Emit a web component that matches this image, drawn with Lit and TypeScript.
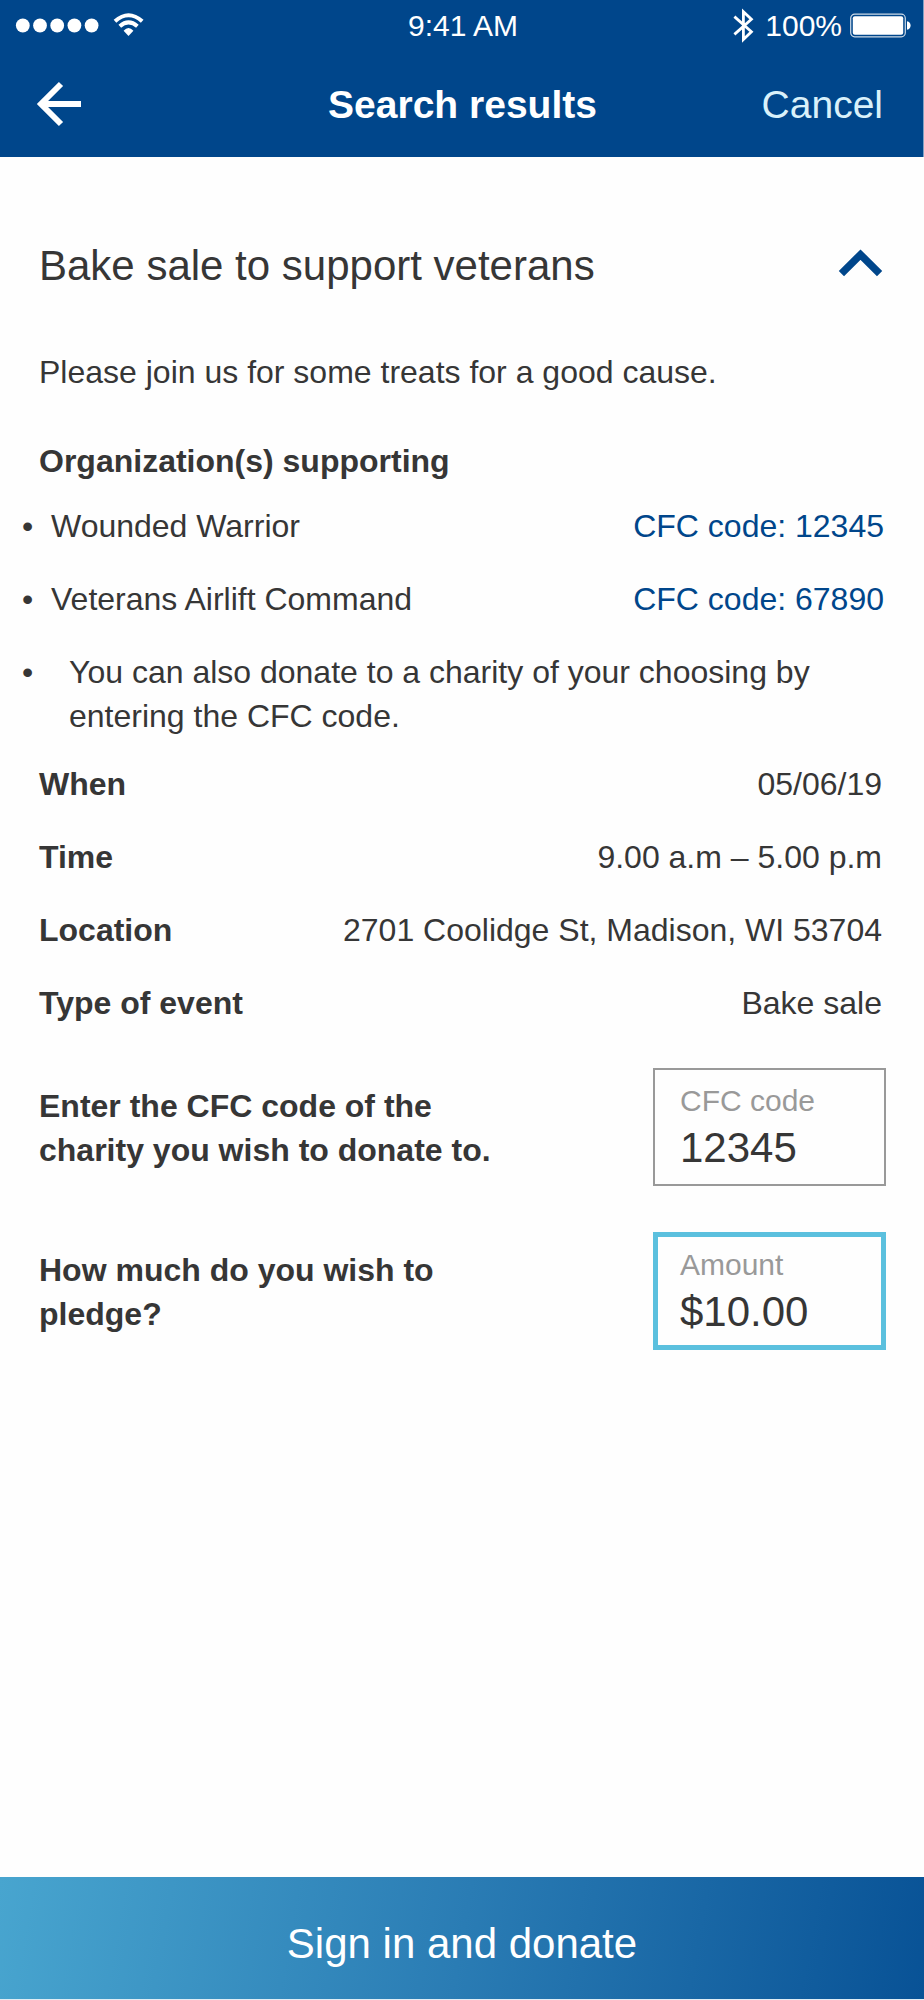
import { LitElement, html, css, svg } from "lit";
import { customElement, state } from "lit/decorators.js";

const organizations = [
  { name: "Wounded Warrior", code: "12345" },
  { name: "Veterans Airlift Command", code: "67890" },
];

const details = [
  { term: "When", value: "05/06/19" },
  { term: "Time", value: "9.00 a.m – 5.00 p.m" },
  { term: "Location", value: "2701 Coolidge St, Madison, WI 53704" },
  { term: "Type of event", value: "Bake sale" },
];

@customElement("status-bar")
class StatusBar extends LitElement {
  static styles = css`
    :host {
      display: grid;
      grid-template-columns: 1fr auto 1fr;
      align-items: center;
      height: 52px;
      padding: 0 12px 0 15px;
      font-size: 30px;
      line-height: 40px;
      color: #fff;
    }
    .side {
      display: flex;
      align-items: center;
    }
    .end {
      justify-content: flex-end;
      gap: 8px;
    }
    svg {
      display: block;
      flex: none;
      overflow: visible;
    }
  `;

  render() {
    return html`
      <div class="side">
        <svg width="130" height="34" viewBox="0 0 130 34" fill="#fff" role="img" aria-label="Signal and Wi-Fi">
          ${[0, 1, 2, 3, 4].map((i) => svg`<circle cx=${7.8 + i * 17.2} cy="16.5" r="6.9" />`)}
          <g fill="none" stroke="#fff" stroke-width="4">
            <path d="M100 12.3 Q113.5 0.2 127.2 12.3" />
            <path d="M104.8 17.2 Q113.5 9.6 122.4 17.2" />
          </g>
          <path d="M108.6 21.8 Q113.5 16.4 118.4 21.8 L113.5 27 Z" />
        </svg>
      </div>
      <div>9:41 AM</div>
      <div class="side end">
        <svg width="24" height="34" viewBox="0 0 24 34" fill="none" stroke="#fff"
          stroke-width="2.8" role="img" aria-label="Bluetooth">
          <path d="M1.4 7.6 L18.4 22.8 L10.4 30.4 V2.8 L18.4 10.2 L1.4 25.4" />
        </svg>
        <span>100%</span>
        <svg width="61" height="26" viewBox="0 0 61 26" role="img" aria-label="Battery full">
          <rect x="0.7" y="1.2" width="54.6" height="22.6" rx="4" fill="none" stroke="#fff" stroke-opacity="0.8" stroke-width="1.2" />
          <rect x="2.8" y="3.2" width="50.4" height="18.6" rx="2" fill="#fff" />
          <path d="M57 8.2 Q60.6 9 60.6 12.5 Q60.6 16 57 16.8 Z" fill="#fff" />
        </svg>
      </div>
    `;
  }
}

@customElement("app-root")
class AppRoot extends LitElement {
  @state() private open = true;

  static styles = css`
    :host {
      display: flex;
      flex-direction: column;
      min-height: 100vh;
      background: #fefefe;
      color: #363636;
      font-family: "Liberation Sans", Arial, sans-serif;
      font-size: 32px;
      line-height: 44px;
    }
    * {
      box-sizing: border-box;
    }
    h1,
    h2,
    h3,
    p,
    ul,
    dl,
    dd {
      margin: 0;
      padding: 0;
    }
    button {
      margin: 0;
      padding: 0;
      border: 0;
      background: none;
      font-family: inherit;
      cursor: pointer;
    }
    svg {
      display: block;
    }
    .header {
      background: #00468b;
      border-right: 1px solid #7fa2c5;
    }
    .nav {
      display: grid;
      grid-template-columns: 1fr auto 1fr;
      align-items: center;
      height: 105px;
      padding: 0 40px 0 42px;
    }
    .back {
      justify-self: start;
      margin-left: -6px;
    }
    .nav-title {
      font-size: 39px;
      font-weight: bold;
      color: #fff;
    }
    .cancel {
      justify-self: end;
      font-size: 39px;
      line-height: 44px;
      color: #d9f1fa;
    }
    .content {
      flex: 1;
      padding: 84px 38px 60px 39px;
    }
    .event-head {
      display: flex;
      align-items: center;
      justify-content: space-between;
      padding-right: 3px;
    }
    .event-title {
      font-size: 42px;
      line-height: 50px;
      font-weight: normal;
    }
    .lead {
      margin-top: 59px;
    }
    .subhead {
      margin-top: 45px;
      font-size: 32px;
      font-weight: bold;
    }
    .orgs {
      display: grid;
      gap: 29px;
      margin: 21px 2px 0 -17px;
      list-style: none;
    }
    .org {
      display: flex;
    }
    .org::before {
      content: "•";
      flex: none;
      width: 29px;
    }
    .org-name {
      flex: 1;
    }
    .note {
      padding-left: 18px;
      max-width: 780px;
    }
    .code {
      color: #00468b;
      text-decoration: none;
    }
    .details {
      display: grid;
      gap: 29px;
      margin: 24px 4px 0 0;
    }
    .detail {
      display: flex;
      justify-content: space-between;
      gap: 24px;
    }
    dt {
      font-weight: bold;
    }
    dd {
      text-align: right;
    }
    .form {
      display: grid;
      gap: 46px;
      margin-top: 43px;
    }
    .question {
      display: flex;
      align-items: center;
      justify-content: space-between;
      gap: 24px;
    }
    .prompt {
      max-width: 460px;
      padding-top: 2px;
      font-weight: bold;
    }
    .field {
      display: grid;
      gap: 6px;
      flex: none;
      width: 233px;
      padding: 16px 15px 14px 27px;
      box-shadow: inset 0 0 0 2px #999;
    }
    .field.active {
      box-shadow: inset 0 0 0 5px #5bc0de;
    }
    .field-label {
      font-size: 30px;
      line-height: 34px;
      color: #999;
    }
    .field-input {
      display: block;
      width: 100%;
      height: 48px;
      padding: 0;
      border: 0;
      outline: 0;
      background: none;
      color: #363636;
      font-family: inherit;
      font-size: 42px;
      line-height: 48px;
    }
    .submit {
      height: 123px;
      border-bottom: 1px solid #dfedf5;
      background: linear-gradient(100deg, #48a5cf, #2a7cb4 50%, #085296) padding-box;
      color: #fff;
      font-size: 42px;
      line-height: 50px;
      padding-top: 11px;
    }
  `;

  private toggle() {
    this.open = !this.open;
  }

  private question(id: string, prompt: string, label: string, value: string, active: boolean) {
    return html`
      <div class="question">
        <label class="prompt" for=${id}>${prompt}</label>
        <div class="field ${active ? "active" : ""}">
          <label class="field-label" for=${id}>${label}</label>
          <input class="field-input" id=${id} type="text" inputmode="decimal" .value=${value} />
        </div>
      </div>
    `;
  }

  render() {
    return html`
      <header class="header">
        <status-bar></status-bar>
        <nav class="nav">
          <button class="back" type="button" aria-label="Back">
            <svg width="46" height="48" viewBox="0 0 46 48" fill="none" stroke="#fff" stroke-width="5.9">
              <path d="M45 23 H5 M25 3 L5 23 L25 43" />
            </svg>
          </button>
          <h1 class="nav-title">Search results</h1>
          <button class="cancel" type="button">Cancel</button>
        </nav>
      </header>
      <main class="content">
        <div class="event-head">
          <h2 class="event-title">Bake sale to support veterans</h2>
          <button type="button" aria-label="Toggle event details" aria-expanded=${this.open} @click=${this.toggle}>
            <svg width="45" height="34" viewBox="0 0 45 34" fill="none" stroke="#00468b" stroke-width="7.4">
              <path d=${this.open ? "M3.4 24.6 L22.5 5.6 L41.6 24.6" : "M3.4 5.6 L22.5 24.6 L41.6 5.6"} />
            </svg>
          </button>
        </div>
        ${this.open
          ? html`
              <p class="lead">Please join us for some treats for a good cause.</p>
              <h3 class="subhead">Organization(s) supporting</h3>
              <ul class="orgs">
                ${organizations.map(
                  (org) => html`
                    <li class="org">
                      <span class="org-name">${org.name}</span>
                      <a class="code" href="#${org.code}">CFC code: ${org.code}</a>
                    </li>
                  `
                )}
                <li class="org">
                  <span class="note">You can also donate to a charity of your choosing by entering the CFC code.</span>
                </li>
              </ul>
              <dl class="details">
                ${details.map(
                  (row) => html`
                    <div class="detail">
                      <dt>${row.term}</dt>
                      <dd>${row.value}</dd>
                    </div>
                  `
                )}
              </dl>
              <form class="form">
                ${this.question("cfc", "Enter the CFC code of the charity you wish to donate to.", "CFC code", "12345", false)}
                ${this.question("amount", "How much do you wish to pledge?", "Amount", "$10.00", true)}
              </form>
            `
          : ""}
      </main>
      <button class="submit" type="button">Sign in and donate</button>
    `;
  }
}
